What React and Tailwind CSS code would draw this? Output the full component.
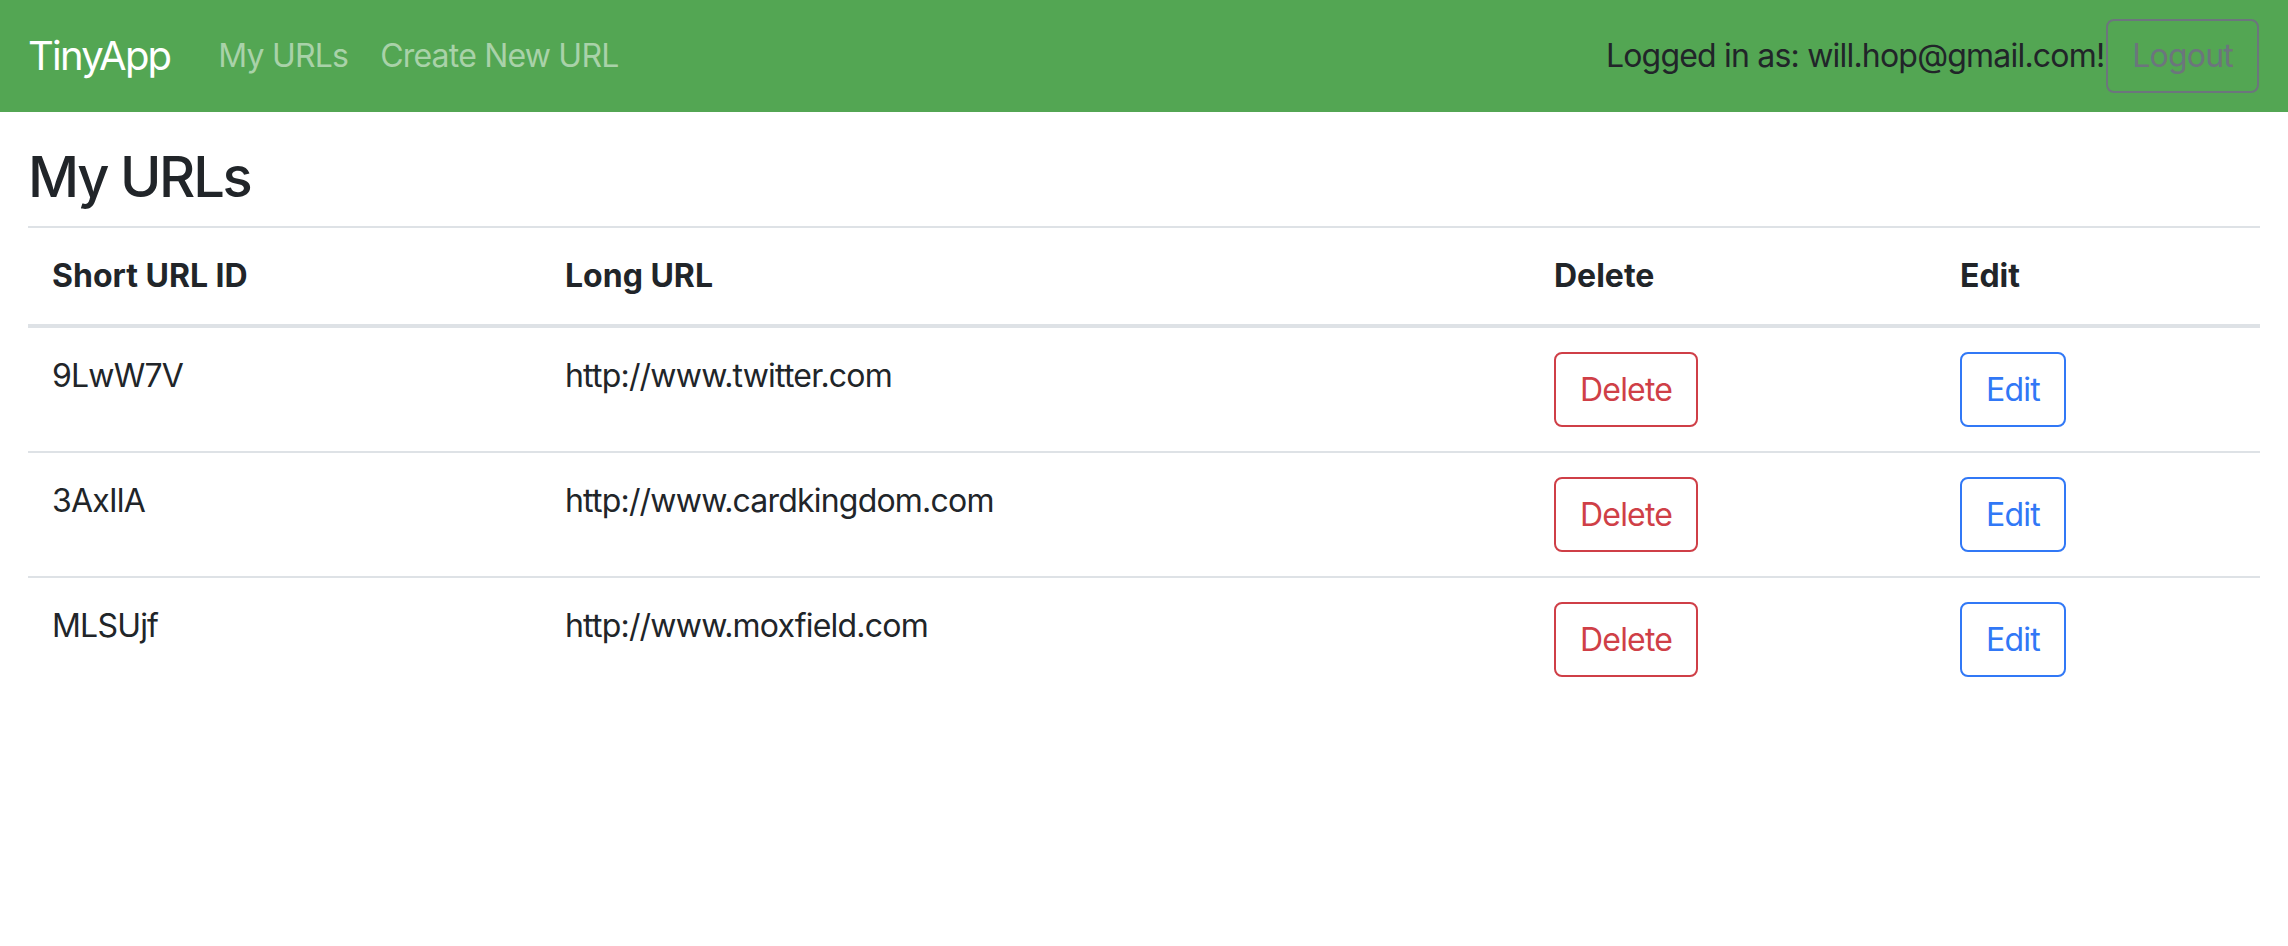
import React from "react";

const urls = [
  { id: "9LwW7V", longURL: "http://www.twitter.com" },
  { id: "3AxIlA", longURL: "http://www.cardkingdom.com" },
  { id: "MLSUjf", longURL: "http://www.moxfield.com" },
];

export default function App() {
  return (
    <div className="min-h-screen bg-white text-[#212529] font-['Inter',sans-serif] text-[32px] leading-[1.5] tracking-[-0.025em]">
      <nav className="h-[112px] bg-[#53a653] flex items-center pl-[28px] pr-[29px]">
        <a href="#" className="text-[40px] leading-[1.5] tracking-[-0.045em] text-white mr-[32px]">TinyApp</a>
        <a href="#" className="px-4 text-[#a9d2a9]">My URLs</a>
        <a href="#" className="px-4 text-[#a9d2a9]">Create New URL</a>

        <div className="ml-auto flex items-center">
          <span>Logged in as: will.hop@gmail.com!</span>
          <button className="ml-[2px] h-[74px] px-[24px] border-2 border-[#6c757d] rounded-[8px] text-[#6c757d]">
            Logout
          </button>
        </div>
      </nav>

      <main className="px-[28px] pt-[32px]">
        <h3 className="text-[56px] leading-[1.2] tracking-[-0.04em] font-medium mb-[15px]">My URLs</h3>

        <table className="w-full table-fixed border-collapse">
          <thead className="tracking-normal">
            <tr>
              <th className="w-[513px] text-left align-bottom p-[24px] border-t-2 border-b-4 border-[#dee2e6]">Short URL ID</th>
              <th className="w-[989px] text-left align-bottom p-[24px] border-t-2 border-b-4 border-[#dee2e6]">Long URL</th>
              <th className="w-[406px] text-left align-bottom p-[24px] border-t-2 border-b-4 border-[#dee2e6]">Delete</th>
              <th className="text-left align-bottom p-[24px] border-t-2 border-b-4 border-[#dee2e6]">Edit</th>
            </tr>
          </thead>
          <tbody>
            {urls.map((u) => (
              <tr key={u.id}>
                <td className="align-top p-[24px] border-t-2 border-[#dee2e6]">{u.id}</td>
                <td className="align-top p-[24px] border-t-2 border-[#dee2e6]">{u.longURL}</td>
                <td className="align-top p-[24px] border-t-2 border-[#dee2e6]">
                  <button className="h-[75px] px-[24px] border-2 border-[#cf3f47] rounded-[8px] text-[#cf3f47]">
                    Delete
                  </button>
                </td>
                <td className="align-top p-[24px] border-t-2 border-[#dee2e6]">
                  <button className="h-[75px] px-[24px] border-2 border-[#3178f6] rounded-[8px] text-[#3178f6]">
                    Edit
                  </button>
                </td>
              </tr>
            ))}
          </tbody>
        </table>
      </main>
    </div>
  );
}
